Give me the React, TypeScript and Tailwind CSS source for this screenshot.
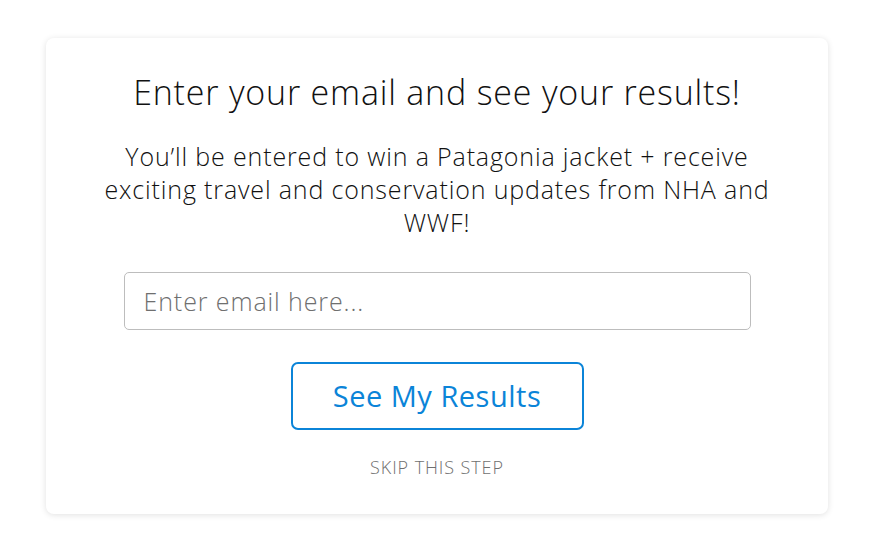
export default function App() {
    return (
        <div className="min-h-[558px] w-[870px] bg-white pt-[38px] font-['Open_Sans',sans-serif]">
            {/* Card */}
            <div className="ml-[46px] w-[782px] h-[476px] bg-white rounded-[8px] shadow-[0_1px_6px_rgba(0,0,0,0.12)] flex flex-col items-center pt-[34px]">
                <h1 className="text-[34px] leading-[40px] font-light tracking-[0.8px] text-[#111] whitespace-nowrap">
                    Enter your email and see your results!
                </h1>
                <p className="mt-[28px] text-center text-[25px] leading-[33px] font-light tracking-[0.85px] text-[#111] whitespace-nowrap">
                    You’ll be entered to win a Patagonia jacket + receive
                    <br />
                    exciting travel and conservation updates from NHA and
                    <br />
                    WWF!
                </p>
                <input
                    type="email"
                    placeholder="Enter email here..."
                    className="mt-[33px] w-[627px] h-[58px] border border-[#bdbdbd] rounded-[5px] px-[19px] text-[25px] font-light tracking-[0.9px] text-[#333] placeholder:text-[#6f6f6f] outline-none font-['Open_Sans',sans-serif]"
                />
                <button className="mt-[32px] w-[293px] h-[68px] border-[2.5px] border-[#0b84d8] rounded-[7px] text-[29px] tracking-[0.5px] text-[#0b84d8] font-normal">
                    See My Results
                </button>
                <a href="#" className="mt-[27px] text-[18px] leading-[20px] font-light tracking-[0.9px] text-[#6f6f6f] uppercase">
                    Skip this step
                </a>
            </div>
        </div>
    );
}
